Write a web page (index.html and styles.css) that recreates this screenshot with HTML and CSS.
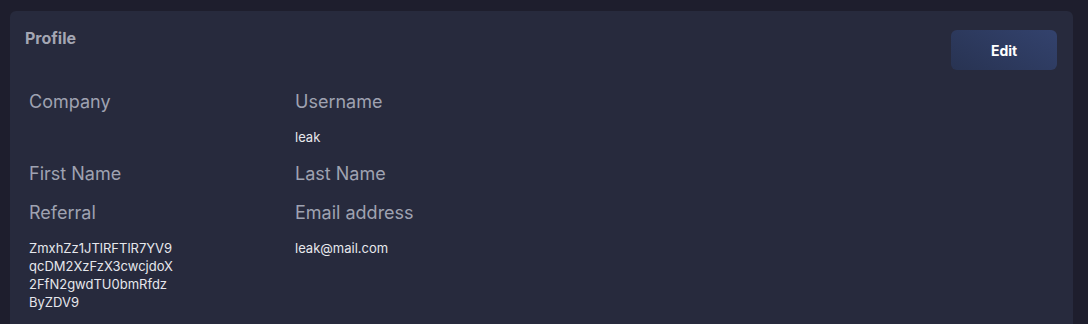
FILE: index.html
```html
<!DOCTYPE html>
<html lang="en">
<head>
    <meta charset="UTF-8">
    <meta name="viewport" content="width=device-width, initial-scale=1.0">
    <title>Profile</title>
    <link rel="stylesheet" href="styles.css">
</head>
<body>
    <div class="card">
        <div class="card-header">
            <h2 class="card-title">Profile</h2>
            <button class="edit-btn">Edit</button>
        </div>
        <div class="fields">
            <div class="field">
                <div class="field-label">Company</div>
                <div class="field-value"></div>
            </div>
            <div class="field">
                <div class="field-label">Username</div>
                <div class="field-value">leak</div>
            </div>
            <div class="field">
                <div class="field-label">First Name</div>
                <div class="field-value"></div>
            </div>
            <div class="field">
                <div class="field-label">Last Name</div>
                <div class="field-value"></div>
            </div>
            <div class="field">
                <div class="field-label">Referral</div>
                <div class="field-value referral">ZmxhZz1JTlRFTlR7YV9qcDM2XzFzX3cwcjdoX2FfN2gwdTU0bmRfdzByZDV9</div>
            </div>
            <div class="field">
                <div class="field-label">Email address</div>
                <div class="field-value">leak@mail.com</div>
            </div>
        </div>
    </div>
</body>
</html>
```

FILE: styles.css
```css
body {
    margin: 0;
    padding: 11px 15px 0 10px;
    background-color: #1e1e2d;
    font-family: 'Inter', 'Open Sans', sans-serif;
}

.card {
    background-color: #272a3d;
    border-radius: 6px 6px 0 0;
    padding: 15px 16px 0 15px;
}

.card-header {
    display: flex;
    justify-content: space-between;
    align-items: flex-start;
}

.card-title {
    margin: 0;
    font-size: 16px;
    line-height: 24px;
    font-weight: 700;
    color: #a4a6b3;
}

.edit-btn {
    margin-top: 4px;
    width: 106px;
    height: 40px;
    border: none;
    border-radius: 6px;
    background: linear-gradient(30deg, #283352, #33426d);
    color: #fff;
    font-family: inherit;
    font-size: 14px;
    font-weight: 700;
    cursor: pointer;
}

.fields {
    display: grid;
    grid-template-columns: 266px 266px;
    margin-top: 19px;
    padding-left: 4px;
}

.field {
    padding-bottom: 14px;
}

.field-label {
    font-size: 18px;
    line-height: 25px;
    color: #9fa2b1;
}

.field-value {
    margin-top: 14px;
    margin-bottom: 1px;
    font-size: 13px;
    line-height: 18px;
    color: #e6e7ec;
}

.field-value:empty {
    display: none;
}

.referral {
    width: 146px;
    word-break: break-all;
}
```
